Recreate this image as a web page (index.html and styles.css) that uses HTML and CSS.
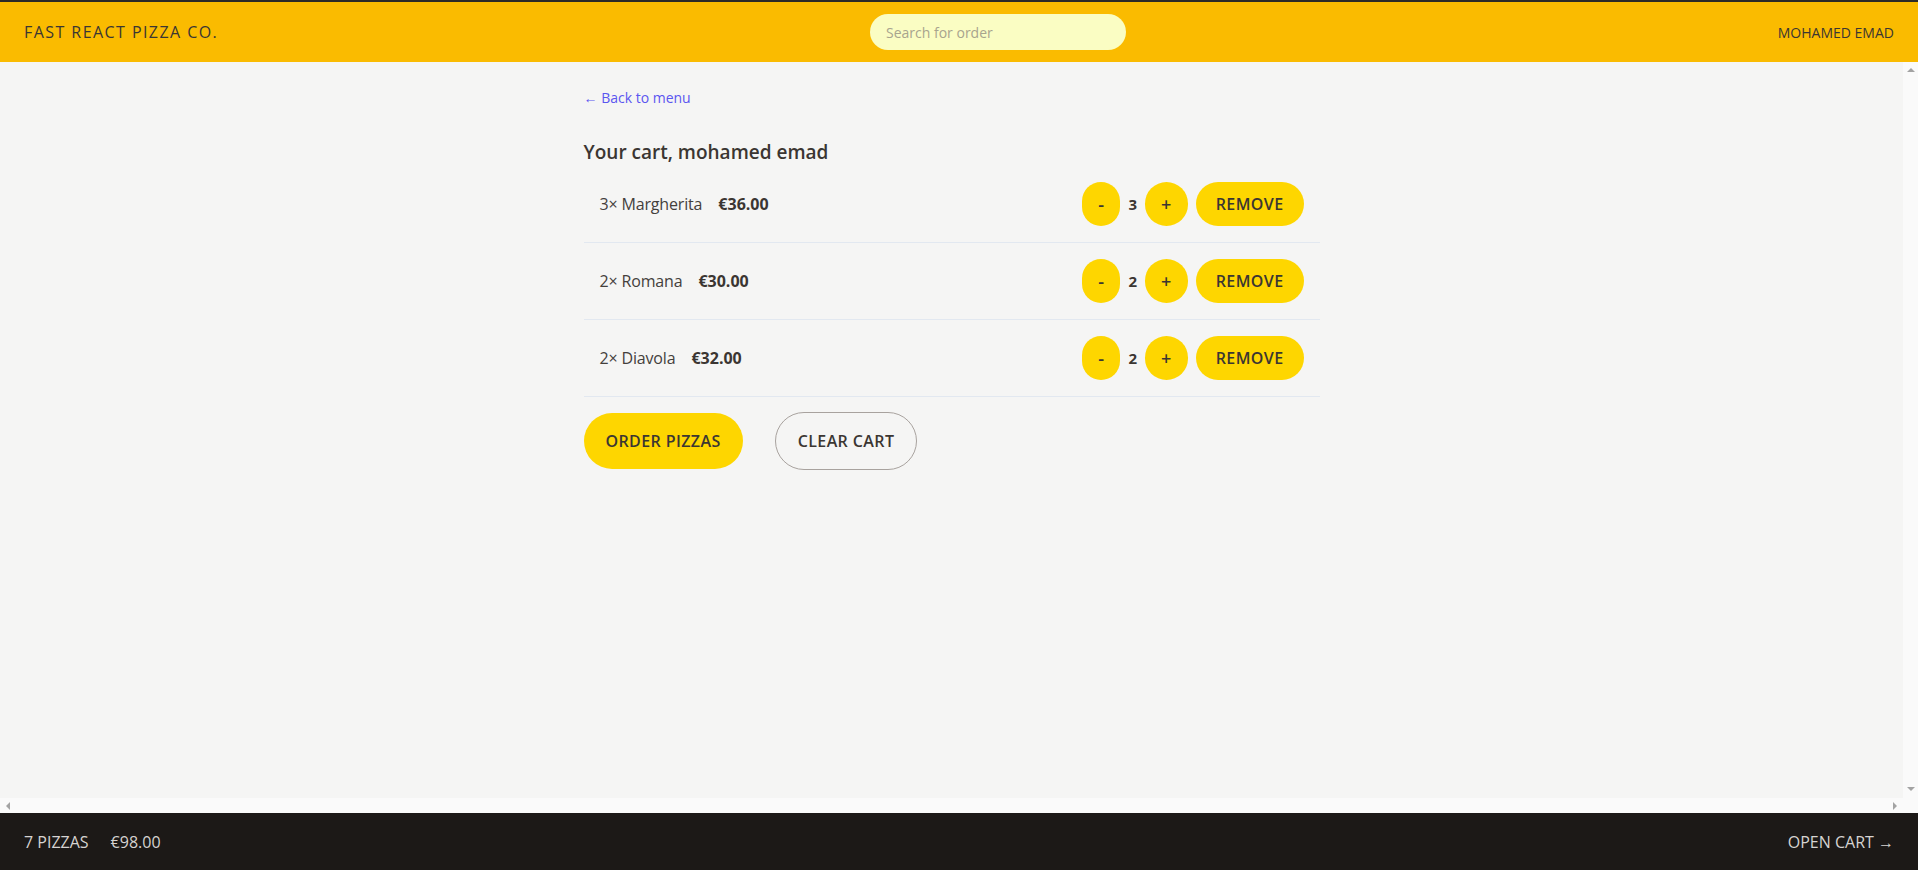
FILE: index.html
```html
<!DOCTYPE html>
<html lang="en">
<head>
<meta charset="utf-8">
<title>Fast React Pizza Co.</title>
<link rel="stylesheet" href="styles.css">
</head>
<body>
<div class="app">
  <header class="header">
    <a class="logo" href="#">Fast React Pizza Co.</a>
    <form class="search-form">
      <input class="search" type="text" placeholder="Search for order">
    </form>
    <div class="username">mohamed emad</div>
  </header>

  <div class="main-area">
    <div class="main-scroll">
      <main class="container">
        <a class="back" href="#">&larr; Back to menu</a>
        <h2 class="title">Your cart, mohamed emad</h2>

        <ul class="cart-list">
          <li class="cart-item">
            <div class="item-info">
              <p class="item-name">3&times; Margherita</p>
              <p class="item-price">€36.00</p>
            </div>
            <div class="item-actions">
              <div class="qty">
                <button class="btn btn-round">-</button>
                <span class="qty-num">3</span>
                <button class="btn btn-round">+</button>
              </div>
              <button class="btn btn-small">Remove</button>
            </div>
          </li>
          <li class="cart-item">
            <div class="item-info">
              <p class="item-name">2&times; Romana</p>
              <p class="item-price">€30.00</p>
            </div>
            <div class="item-actions">
              <div class="qty">
                <button class="btn btn-round">-</button>
                <span class="qty-num">2</span>
                <button class="btn btn-round">+</button>
              </div>
              <button class="btn btn-small">Remove</button>
            </div>
          </li>
          <li class="cart-item">
            <div class="item-info">
              <p class="item-name">2&times; Diavola</p>
              <p class="item-price">€32.00</p>
            </div>
            <div class="item-actions">
              <div class="qty">
                <button class="btn btn-round">-</button>
                <span class="qty-num">2</span>
                <button class="btn btn-round">+</button>
              </div>
              <button class="btn btn-small">Remove</button>
            </div>
          </li>
        </ul>

        <div class="cart-buttons">
          <a class="btn btn-primary" href="#">Order pizzas</a>
          <button class="btn btn-secondary">Clear cart</button>
        </div>
      </main>
    </div>
    <div class="vbar" aria-hidden="true">
      <span class="arrow arrow-up"></span>
      <span class="arrow arrow-down"></span>
    </div>
    <div class="hbar" aria-hidden="true">
      <span class="arrow arrow-left"></span>
      <span class="arrow arrow-right"></span>
    </div>
    <div class="corner" aria-hidden="true"></div>
  </div>

  <footer class="footer">
    <p class="footer-summary">
      <span>7 pizzas</span>
      <span>€98.00</span>
    </p>
    <a class="open-cart" href="#">Open cart &rarr;</a>
  </footer>
</div>
</body>
</html>
```

FILE: styles.css
```css
* {
  box-sizing: border-box;
}

html, body {
  margin: 0;
  padding: 0;
}

body {
  font-family: "Open Sans", "Noto Sans", "Liberation Sans", sans-serif;
  color: #292524;
  background: #f5f5f4;
}

a {
  color: inherit;
  text-decoration: none;
}

p, h2, ul {
  margin: 0;
  padding: 0;
}

ul {
  list-style: none;
}

.app {
  display: grid;
  grid-template-rows: auto 1fr auto;
  height: 100vh;
}

/* Header */
.header {
  display: flex;
  align-items: center;
  justify-content: space-between;
  background: #fabb00;
  border-top: 2px solid #2c2a27;
  padding: 12px 24px;
}

.logo {
  font-size: 16px;
  letter-spacing: 0.09em;
  text-transform: uppercase;
  color: #3a3633;
}

.search-form {
  margin: 0;
}

.search {
  display: block;
  width: 256px;
  height: 36px;
  border: none;
  border-radius: 9999px;
  background: #fafdc3;
  padding: 8px 16px;
  font-family: inherit;
  font-size: 14px;
  color: #44403c;
  outline: none;
}

.search::placeholder {
  color: #a8a48e;
}

.username {
  font-size: 14px;
  text-transform: uppercase;
  color: #3a3633;
}

/* Main area with classic scrollbar chrome */
.main-area {
  display: grid;
  grid-template-columns: 1fr 15px;
  grid-template-rows: 1fr 15px;
  min-height: 0;
}

.main-scroll {
  overflow: hidden;
  background: #f5f5f4;
}

.vbar {
  display: flex;
  flex-direction: column;
  justify-content: space-between;
  align-items: center;
  padding: 6px 0 7px;
  background: #fafafa;
}

.hbar {
  display: flex;
  justify-content: space-between;
  align-items: center;
  padding: 0 6px 0 6px;
  background: #fafafa;
}

.corner {
  background: #fafafa;
}

.arrow {
  display: block;
  width: 0;
  height: 0;
  border: 4px solid transparent;
}

.arrow-up {
  border-top-width: 0;
  border-bottom: 4px solid #a3a3a3;
}

.arrow-down {
  border-bottom-width: 0;
  border-top: 4px solid #a3a3a3;
}

.arrow-left {
  border-left-width: 0;
  border-right: 4px solid #a3a3a3;
}

.arrow-right {
  border-right-width: 0;
  border-left: 4px solid #a3a3a3;
}

.container {
  display: block;
  max-width: 768px;
  margin: 0 auto;
  padding: 24px 16px;
}

.back {
  display: inline-block;
  font-size: 14px;
  line-height: 20px;
  color: #5b56f0;
}

.title {
  margin-top: 30px;
  font-size: 19px;
  line-height: 28px;
  font-weight: 600;
  color: #3b3632;
}

.cart-list {
  border-bottom: 1px solid #e2e8f0;
}

.cart-item {
  display: flex;
  align-items: center;
  justify-content: space-between;
  padding: 16px;
}

.cart-item + .cart-item {
  border-top: 1px solid #e2e8f0;
}

.item-info {
  display: flex;
  align-items: center;
  gap: 16px;
  font-size: 16px;
}

.item-name {
  color: #44403c;
  letter-spacing: -0.01em;
}

.item-price {
  font-weight: 700;
  color: #3b3632;
}

.item-actions {
  display: flex;
  align-items: center;
  gap: 8px;
}

.qty {
  display: flex;
  align-items: center;
  gap: 8px;
}

.qty-num {
  font-size: 15px;
  font-weight: 700;
  color: #3b3632;
}

/* Buttons */
.btn {
  display: inline-block;
  border: none;
  border-radius: 9999px;
  background: #fed600;
  color: #3b3632;
  font-family: inherit;
  font-weight: 600;
  text-transform: uppercase;
  letter-spacing: 0.025em;
  cursor: pointer;
}

.btn-round {
  height: 44px;
  padding: 0 16px;
  font-size: 18px;
  line-height: 24px;
}

.btn-small {
  height: 44px;
  padding: 10px 20px;
  font-size: 16px;
  line-height: 24px;
}

.cart-buttons {
  margin-top: 15px;
  display: flex;
  align-items: center;
  gap: 32px;
}

.btn-primary {
  padding: 16px 22px;
  font-size: 16px;
  line-height: 24px;
}

.btn-secondary {
  background: transparent;
  border: 1px solid #a8a29e;
  padding: 16px 22px;
  font-size: 16px;
  line-height: 24px;
  color: #3b3632;
}

/* Footer */
.footer {
  display: flex;
  align-items: center;
  justify-content: space-between;
  background: #1c1917;
  color: #d6d3d1;
  padding: 16px 24px;
  font-size: 16px;
  line-height: 24px;
  text-transform: uppercase;
  border-top: 1px solid #1c1917;
}

.footer-summary {
  display: flex;
  gap: 22px;
}
```
